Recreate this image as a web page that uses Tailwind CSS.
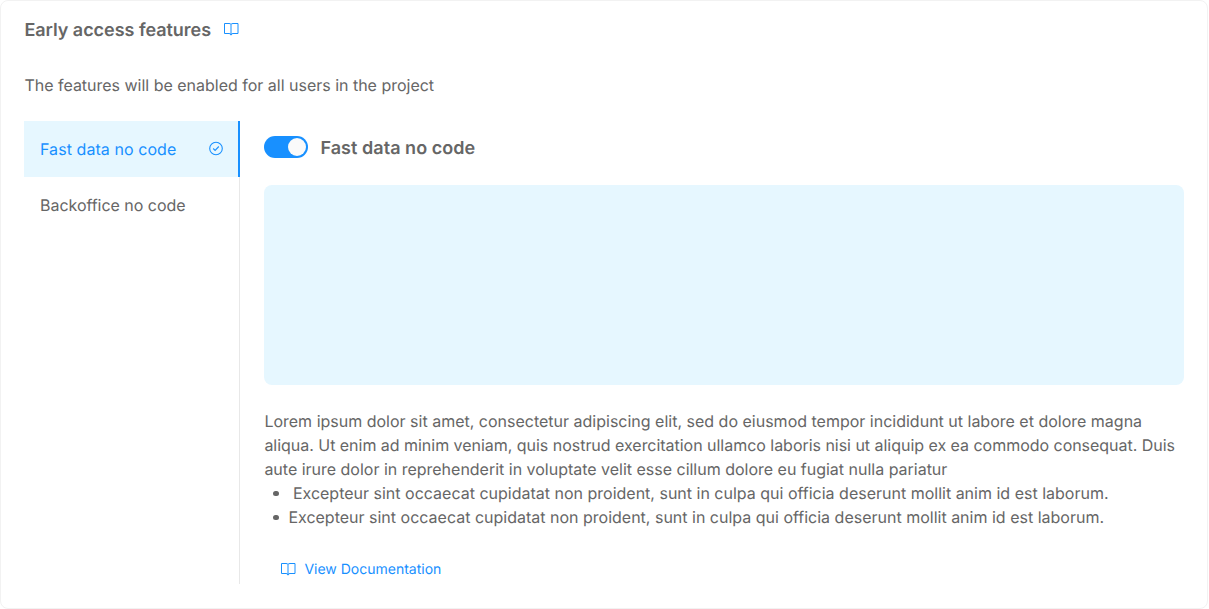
<!DOCTYPE html>
<html lang="en"><head><meta charset="utf-8"><title>Early access features</title>
<script src="https://cdn.jsdelivr.net/npm/@tailwindcss/browser@4"></script></head>
<body class="h-[609px] w-[1209px] overflow-hidden bg-white font-['Inter',sans-serif] text-base leading-6 text-[#666666] [text-rendering:geometricPrecision]">
<main class="flex h-[608.5px] w-[1208px] flex-col rounded-lg border border-[#f2f2f2] bg-white px-[23.4px]">
<header class="mt-4 flex h-6 items-start gap-3"><h1 class="pt-[1.5px] text-lg leading-6 font-semibold tracking-[-0.03px] whitespace-nowrap">Early access features</h1>
<svg class="mt-1 size-4" viewBox="0 0 16 16" fill="none" stroke="#1890ff" stroke-width="1"><path d="M1.5 2.5H6Q8 2.5 8 3.5Q8 2.5 10 2.5H15V12.5H10Q8 12.5 8 14Q8 12.5 6 12.5H1.5ZM8 3.5V14.3"/></svg></header>
<p class="mt-8 tracking-[-0.01px]">The features will be enabled for all users in the project</p>
<div class="mt-6 flex h-[463px]">
<nav class="w-[216px] shrink-0 border-r border-[#e8e8e8]">
<div class="flex h-14 w-[216px] items-center justify-between border-r-2 border-[#1890ff] bg-[#e6f7ff] pr-3.5 pl-[15.6px] text-[#1890ff]"><span class="tracking-[0.07px]">Fast data no code</span>
<svg class="size-4" viewBox="0 0 16 16" fill="none" stroke="#1890ff" stroke-width="1.1"><circle cx="8" cy="7.5" r="6.3"/><path d="M5.2 7.5L7.1 9.4L10.8 5.5"/></svg></div>
<div class="flex h-14 items-center pl-[15.6px] tracking-[-0.03px]">Backoffice no code</div></nav>
<section class="ml-6 w-[920px]">
<div class="mt-[15px] flex h-[22px] items-center gap-3"><div class="flex h-[22px] w-11 items-center justify-end rounded-full bg-[#1890ff] p-0.5"><span class="size-[18px] rounded-full bg-[#fafafa]"></span></div><h2 class="pt-[3px] text-lg leading-6 font-semibold tracking-[0.05px]">Fast data no code</h2></div>
<div class="mt-[26.5px] h-[200px] rounded-lg bg-[#e6f7ff]"></div>
<div class="mt-[24.5px] whitespace-nowrap"><p>Lorem ipsum dolor sit amet, consectetur adipiscing elit, sed do eiusmod tempor incididunt ut labore et dolore magna<br><span class="tracking-[-0.028px]">aliqua. Ut enim ad minim veniam, quis nostrud exercitation ullamco laboris nisi ut aliquip ex ea commodo consequat. Duis</span><br><span class="tracking-[-0.01px]">aute irure dolor in reprehenderit in voluptate velit esse cillum dolore eu fugiat nulla pariatur</span></p>
<ul>
<li class="flex items-center pl-[9px]"><span class="mt-px mr-[14px] size-[5.5px] rounded-full bg-[#666666]"></span>Excepteur sint occaecat cupidatat non proident, sunt in culpa qui officia deserunt mollit anim id est laborum.</li>
<li class="flex items-center pl-[9px]"><span class="mt-px mr-[9.5px] size-[5.5px] rounded-full bg-[#666666]"></span>Excepteur sint occaecat cupidatat non proident, sunt in culpa qui officia deserunt mollit anim id est laborum.</li></ul></div>
<div class="mt-7 flex h-6 items-center gap-2 pl-4 text-sm leading-6 text-[#1890ff]"><svg class="size-4" viewBox="0 0 16 16" fill="none" stroke="#1890ff" stroke-width="1"><path d="M1.5 2.5H6Q8 2.5 8 3.5Q8 2.5 10 2.5H15V12.5H10Q8 12.5 8 14Q8 12.5 6 12.5H1.5ZM8 3.5V14.3"/></svg><span class="pt-px">View Documentation</span></div>
</section></div></main></body></html>
